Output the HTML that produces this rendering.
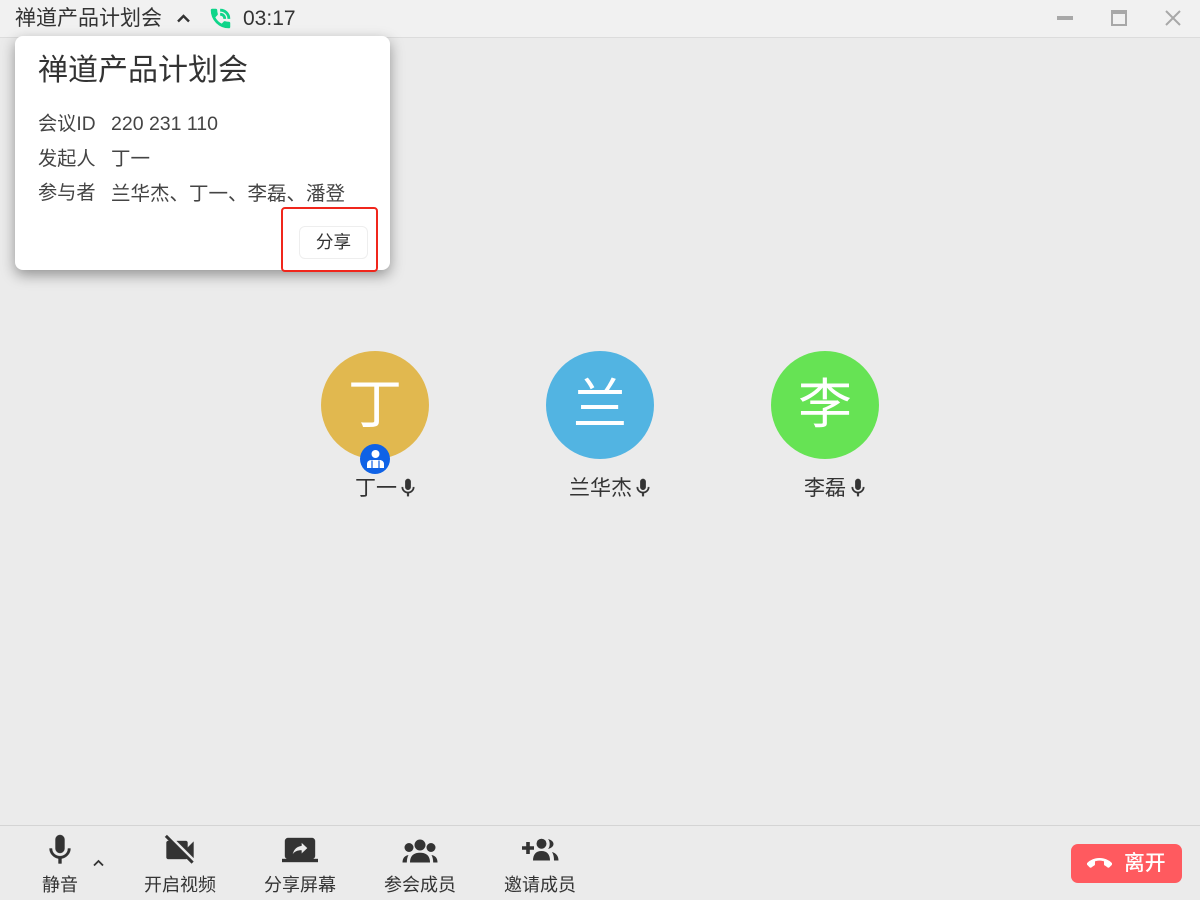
<!DOCTYPE html>
<html lang="zh">
<head>
<meta charset="utf-8">
<title>禅道产品计划会</title>
<style>
html,body{margin:0;padding:0}
body{width:1200px;height:900px;overflow:hidden;position:relative;background:#ebebeb;color:#333;font-family:"Liberation Sans","Noto Sans CJK SC",sans-serif}
.a{position:absolute;white-space:nowrap}
svg{position:absolute;display:block}
.ic{fill:#333;stroke:#333;stroke-width:.25}
.lbl{font-size:18px;line-height:24px;top:873px;width:120px;text-align:center;color:#333}
.av{position:absolute;top:351px;width:108px;height:108px;border-radius:50%;color:#fff;font-size:54px;line-height:108px;text-align:center}
.nm{font-size:21px;line-height:28px;top:475px;color:#333}
.m{fill:#333;stroke:#333;stroke-width:.3}
.r{font-size:19.200px;line-height:28px;color:#444}
.v{font-size:19.500px;line-height:28px;color:#444}
</style>
</head>
<body>
<div class="a" style="left:0;top:0;width:1200px;height:37px;background:#f1f1f1;border-bottom:1px solid #dcdcdc"></div>
<div class="a" style="left:15px;top:5px;font-size:21px;line-height:28px">禅道产品计划会</div>
<svg style="left:176px;top:13px" width="15" height="10" viewBox="0 0 15 10"><path d="M2 8.500L7.500 3L13 8.500" fill="none" stroke="#333" stroke-width="2.400"/></svg>
<svg style="left:208px;top:6px" width="25" height="25" viewBox="0 0 24 24"><path fill="#0fd58a" stroke="#0fd58a" stroke-width=".7" d="M20 15.500c-1.250 0-2.450-.2-3.570-.57-.35-.11-.74-.03-1.020.24l-2.200 2.200c-2.830-1.440-5.150-3.750-6.590-6.590l2.200-2.210c.28-.26.36-.65.25-1C8.700 6.450 8.500 5.250 8.500 4c0-.55-.45-1-1-1H4c-.55 0-1 .45-1 1 0 9.390 7.610 17 17 17 .55 0 1-.45 1-1v-3.500c0-.55-.45-1-1-1zM19 12h2c0-4.970-4.030-9-9-9v2c3.870 0 7 3.130 7 7zm-4 0h2c0-2.760-2.240-5-5-5v2c1.660 0 3 1.340 3 3z"/></svg>
<div class="a" style="left:243px;top:5px;font-size:21px;line-height:28px">03:17</div>
<div class="a" style="left:1057px;top:16px;width:16px;height:4px;background:#a8a8a8"></div>
<div class="a" style="left:1111px;top:10px;width:12px;height:10px;border:2px solid #a8a8a8;border-top-width:4px"></div>
<svg style="left:1165px;top:10px" width="16" height="16" viewBox="0 0 16 16"><path d="M1 1L15 15M15 1L1 15" stroke="#a8a8a8" stroke-width="2" fill="none"/></svg>

<div class="a" style="left:15px;top:36px;width:375px;height:234px;background:#fff;border-radius:8px;box-shadow:0 5px 14px rgba(0,0,0,.38)"></div>
<div class="a" style="left:38px;top:51px;font-size:30px;line-height:40px;color:#333">禅道产品计划会</div>
<div class="a r" style="left:38px;top:111px">会议ID</div>
<div class="a v" style="left:111px;top:110px">220 231 110</div>
<div class="a r" style="left:38px;top:146px">发起人</div>
<div class="a v" style="left:111px;top:145px">丁一</div>
<div class="a r" style="left:38px;top:180px">参与者</div>
<div class="a v" style="left:111px;top:180px">兰华杰、丁一、李磊、潘登</div>
<div class="a" style="left:299px;top:226px;width:67px;height:31px;border:1px solid #eee;border-radius:6px;background:#fff;font-size:17.600px;line-height:30px;text-align:center;color:#333">分享</div>
<div class="a" style="left:281px;top:207px;width:93px;height:61px;border:2px solid #f0261c;border-radius:4px"></div>

<div class="av" style="left:321px;background:#e1b84f">丁</div>
<div class="av" style="left:546px;background:#52b4e2">兰</div>
<div class="av" style="left:771px;background:#66e354">李</div>

<svg style="left:360px;top:444px" width="30" height="30" viewBox="0 0 30 30"><circle cx="15" cy="15" r="15" fill="#0f62e6"/><circle cx="15.500" cy="10" r="4" fill="#fff"/><path fill="#fff" d="M7 24v-4c0-2.400 2-4 4.500-4h8c2.500 0 4.500 1.600 4.500 4v4z"/><path d="M12 16.500v7.500M19 16.500v7.500" stroke="#0f62e6" stroke-width="1.200"/></svg>

<div class="a nm" style="left:355px">丁一</div>
<svg class="m" style="left:397px;top:477px" width="22" height="22" viewBox="0 0 24 24"><path d="M12 14c1.660 0 2.990-1.340 2.990-3L15 5c0-1.660-1.340-3-3-3S9 3.340 9 5v6c0 1.660 1.340 3 3 3zm5.300-3c0 3-2.540 5.100-5.300 5.100S6.700 14 6.700 11H5c0 3.410 2.720 6.230 6 6.720V21h2v-3.280c3.280-.48 6-3.300 6-6.720h-1.700z"/></svg>
<div class="a nm" style="left:569px">兰华杰</div>
<svg class="m" style="left:632px;top:477px" width="22" height="22" viewBox="0 0 24 24"><path d="M12 14c1.660 0 2.990-1.340 2.990-3L15 5c0-1.660-1.340-3-3-3S9 3.340 9 5v6c0 1.660 1.340 3 3 3zm5.300-3c0 3-2.540 5.100-5.300 5.100S6.700 14 6.700 11H5c0 3.410 2.720 6.230 6 6.720V21h2v-3.280c3.280-.48 6-3.300 6-6.720h-1.700z"/></svg>
<div class="a nm" style="left:804px">李磊</div>
<svg class="m" style="left:847px;top:477px" width="22" height="22" viewBox="0 0 24 24"><path d="M12 14c1.660 0 2.990-1.340 2.990-3L15 5c0-1.660-1.340-3-3-3S9 3.340 9 5v6c0 1.660 1.340 3 3 3zm5.300-3c0 3-2.540 5.100-5.300 5.100S6.700 14 6.700 11H5c0 3.410 2.720 6.230 6 6.720V21h2v-3.280c3.280-.48 6-3.300 6-6.720h-1.700z"/></svg>

<div class="a" style="left:0;top:825px;width:1200px;height:1px;background:#d4d4d4"></div>

<svg class="ic" style="left:42px;top:832px" width="36" height="36" viewBox="0 0 24 24"><path d="M12 14c1.660 0 2.990-1.340 2.990-3L15 5c0-1.660-1.340-3-3-3S9 3.340 9 5v6c0 1.660 1.340 3 3 3zm5.300-3c0 3-2.540 5.100-5.300 5.100S6.700 14 6.700 11H5c0 3.410 2.720 6.230 6 6.720V21h2v-3.280c3.280-.48 6-3.300 6-6.720h-1.700z"/></svg>
<svg style="left:92px;top:859px" width="13" height="8" viewBox="0 0 13 8"><path d="M2 6.500L6.500 2L11 6.500" fill="none" stroke="#333" stroke-width="1.800"/></svg>
<div class="a lbl" style="left:0">静音</div>

<svg class="ic" style="left:162px;top:832px" width="36" height="36" viewBox="0 0 24 24"><path d="M21 6.500l-4 4V7c0-.55-.45-1-1-1H9.820L21 17.180V6.500zM3.270 2L2 3.270 4.730 6H4c-.55 0-1 .45-1 1v10c0 .55.45 1 1 1h12c.21 0 .39-.08.54-.18L19.730 21 21 19.730 3.270 2z"/></svg>
<div class="a lbl" style="left:120px">开启视频</div>

<svg class="ic" style="left:282px;top:832px" width="36" height="36" viewBox="0 0 24 24"><path d="M20 18c1.100 0 1.990-.9 1.990-2L22 6c0-1.110-.9-2-2-2H4c-1.110 0-2 .89-2 2v10c0 1.100.89 2 2 2H0v2h24v-2h-4zm-7-3.530v-2.190c-2.780 0-4.610.85-6 2.720.56-2.670 2.110-5.330 6-5.870V7l4 3.730-4 3.740z"/></svg>
<div class="a lbl" style="left:240px">分享屏幕</div>

<svg style="left:402px;top:838px" width="36" height="26" viewBox="0 0 36 26" fill="#333"><circle cx="7" cy="9.500" r="4.500"/><circle cx="29" cy="9.500" r="4.500"/><circle cx="18" cy="7" r="5.500" stroke="#ebebeb" stroke-width="1.200" paint-order="stroke"/><path d="M8 24.500c0-7 4-9.800 10-9.800s10 2.800 10 9.800z"/><path d="M0.500 24.500c0-4.200 2-6.800 6-7.500-1.200 2.200-1.600 4.500-1.700 7.500zM35.500 24.500c0-4.200-2-6.800-6-7.500 1.200 2.200 1.600 4.500 1.700 7.500z"/></svg>
<div class="a lbl" style="left:360px">参会成员</div>

<svg style="left:521px;top:838px" width="38" height="24" viewBox="0 0 38 24" fill="#333"><path d="M1 8.200h4.200V4h3.600v4.200H13v3.600H8.800V16H5.200v-4.200H1z"/><circle cx="20.500" cy="5.700" r="5"/><path d="M12 22.500c0-6 3-9.500 8.500-9.500S29 16.500 29 22.500z"/><path d="M27 1c3 .7 5.500 2.500 5.500 5s-2.500 4.300-5.500 5c1.300-1.500 1.700-3.300 1.700-5s-.4-3.500-1.700-5zM31 14c4 1 6.500 4 6.500 8.500H33c0-3.500-.5-6-2-8.500z"/></svg>
<div class="a lbl" style="left:480px">邀请成员</div>

<div class="a" style="left:1071px;top:844px;width:111px;height:39px;border-radius:7px;background:#ff5a5f"></div>
<svg style="left:1087px;top:851px" width="25" height="25" viewBox="0 0 24 24"><path fill="#fff" stroke="#fff" stroke-width=".5" d="M12 9c-1.600 0-3.150.25-4.600.72v3.100c0 .39-.23.74-.56.9-.98.49-1.870 1.120-2.660 1.850-.18.18-.43.28-.7.28-.28 0-.53-.11-.71-.29L.29 13.080c-.18-.17-.29-.42-.29-.7 0-.28.11-.53.29-.71C3.340 8.780 7.460 7 12 7s8.660 1.780 11.710 4.670c.18.18.29.43.29.71 0 .28-.11.53-.29.71l-2.480 2.480c-.18.18-.43.29-.71.29-.27 0-.52-.11-.7-.28-.79-.74-1.690-1.360-2.670-1.850-.33-.16-.56-.5-.56-.9v-3.100C15.150 9.250 13.600 9 12 9z"/></svg>
<div class="a" style="left:1124px;top:850px;font-size:20.800px;line-height:28px;color:#fff;font-weight:500">离开</div>
</body>
</html>
